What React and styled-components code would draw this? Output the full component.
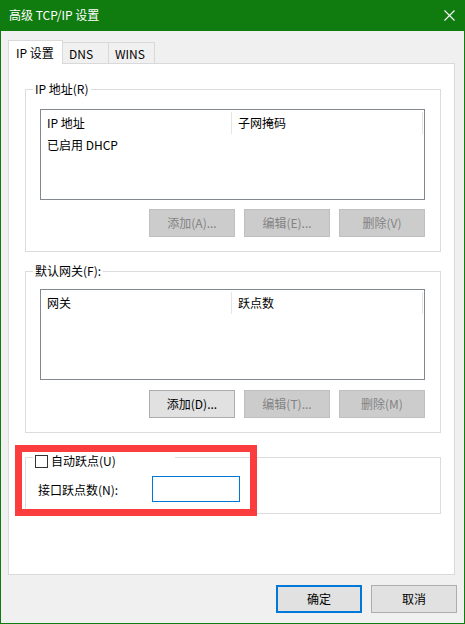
import React from "react";
import styled, { createGlobalStyle } from "styled-components";

const colors = {
  accent: "#107c10",
  face: "#f0f0f0",
  tabLine: "#d9d9d9",
  groupLine: "#dcdcdc",
  listLine: "#828790",
  focus: "#0078d7",
  annotation: "#fb3d3d",
};

const GlobalStyle = createGlobalStyle`
  html, body {
    margin: 0;
    padding: 0;
    background: #fff;
  }
  body {
    font-family: "Noto Sans CJK SC", "Noto Sans", sans-serif;
    font-size: 12px;
    color: #000;
  }
`;

const ipColumns = ["IP 地址", "子网掩码"];
const gatewayColumns = ["网关", "跃点数"];

function ListView({ columns, rows = [] }) {
  return (
    <ListBox>
      <ListHeader>
        {columns.map((c) => (
          <HeaderCell key={c}>{c}</HeaderCell>
        ))}
      </ListHeader>
      {rows.map((r) => (
        <ListRow key={r}>{r}</ListRow>
      ))}
    </ListBox>
  );
}

function App() {
  return (
    <>
      <GlobalStyle />
      <Window>
        <TitleBar>
          <Title>高级 TCP/IP 设置</Title>
          <CloseIcon width="11" height="11" viewBox="0 0 11 11">
            <path d="M0.5 0.5 L10.5 10.5 M10.5 0.5 L0.5 10.5" stroke="#fff" strokeWidth="1.1" />
          </CloseIcon>
        </TitleBar>

        <Body>
          <TabStrip>
            <Tab $active $width={55}>IP 设置</Tab>
            <Tab $width={47}>DNS</Tab>
            <Tab $width={47}>WINS</Tab>
          </TabStrip>

          <TabPage>
            <Group $top={25}>
              <Legend>IP 地址(R)</Legend>
              <ListSpacer $gap={12}>
                <ListView columns={ipColumns} rows={["已启用 DHCP"]} />
              </ListSpacer>
              <ButtonRow $gap={9}>
                <Button disabled>添加(A)...</Button>
                <Button disabled>编辑(E)...</Button>
                <Button disabled>删除(V)</Button>
              </ButtonRow>
            </Group>

            <Group $top={19}>
              <Legend>默认网关(F):</Legend>
              <ListSpacer $gap={10}>
                <ListView columns={gatewayColumns} />
              </ListSpacer>
              <ButtonRow $gap={10}>
                <Button>添加(D)...</Button>
                <Button disabled>编辑(T)...</Button>
                <Button disabled>删除(M)</Button>
              </ButtonRow>
            </Group>

            <MetricGroup>
              <CheckLegend>
                <CheckBox />
                自动跃点(U)
              </CheckLegend>
              <MetricRow>
                <span>接口跃点数(N):</span>
                <TextBox />
              </MetricRow>
            </MetricGroup>
          </TabPage>

          <Footer>
            <Button $default>确定</Button>
            <Button>取消</Button>
          </Footer>
        </Body>

        <Highlight />
      </Window>
    </>
  );
}

export default App;

const Window = styled.div`
  position: relative;
  box-sizing: border-box;
  width: 465px;
  height: 624px;
  background: ${colors.face};
  border: 1px solid ${colors.accent};
  border-top: none;
  display: flex;
  flex-direction: column;
`;

const TitleBar = styled.div`
  height: 31px;
  margin: 0 -1px;
  background: ${colors.accent};
  display: flex;
  align-items: center;
  justify-content: space-between;
  padding: 0 10px 0 9px;
`;

const Title = styled.span`
  color: #fff;
  font-size: 12px;
  line-height: 16px;
  margin-top: -1px;
`;

const CloseIcon = styled.svg`
  display: block;
  margin-top: -1px;
`;

const Body = styled.div`
  padding: 9px 0 0 7px;
  display: flex;
  flex-direction: column;
`;

const TabStrip = styled.div`
  display: flex;
  align-items: flex-end;
  height: 24px;
  margin-bottom: -1px;
`;

const Tab = styled.div`
  box-sizing: border-box;
  width: ${(p) => p.$width}px;
  height: ${(p) => (p.$active ? 24 : 22)}px;
  margin-left: ${(p) => (p.$active ? 0 : -1)}px;
  border: 1px solid ${colors.tabLine};
  border-bottom: none;
  background: ${(p) => (p.$active ? "#fff" : colors.face)};
  position: ${(p) => (p.$active ? "relative" : "static")};
  z-index: ${(p) => (p.$active ? 1 : "auto")};
  padding: ${(p) => (p.$active ? "3px 0 0 7px" : "2px 0 0 6px")};
  line-height: 18px;
  white-space: nowrap;
`;

const TabPage = styled.div`
  box-sizing: border-box;
  width: 447px;
  height: 512px;
  background: #fff;
  border: 1px solid ${colors.tabLine};
  padding: 0 0 0 16px;
`;

const Group = styled.div`
  box-sizing: border-box;
  width: 416px;
  margin-top: ${(p) => p.$top}px;
  border: 1px solid ${colors.groupLine};
  padding: 0 15px 14px 14px;
`;

const Legend = styled.div`
  width: fit-content;
  margin: -9px 0 0 -7px;
  padding: 0 2px;
  background: #fff;
  line-height: 16px;
  height: 16px;
`;

const ListSpacer = styled.div`
  margin-top: ${(p) => p.$gap}px;
`;

const ListBox = styled.div`
  box-sizing: border-box;
  width: 385px;
  height: 91px;
  border: 1px solid ${colors.listLine};
  background: #fff;
`;

const ListHeader = styled.div`
  display: flex;
  margin-top: 2px;
  height: 22px;
`;

const HeaderCell = styled.div`
  box-sizing: border-box;
  width: 191px;
  height: 22px;
  border-right: 1px solid #e5e5e5;
  padding-left: 6px;
  line-height: 21px;
`;

const ListRow = styled.div`
  height: 22px;
  line-height: 22px;
  padding-left: 6px;
`;

const ButtonRow = styled.div`
  display: flex;
  justify-content: flex-end;
  gap: 9px;
  margin-top: ${(p) => p.$gap}px;
`;

const Button = styled.button`
  box-sizing: border-box;
  width: 86px;
  height: 28px;
  margin: 0;
  padding: 0;
  font-family: inherit;
  font-size: 12px;
  line-height: 16px;
  color: #000;
  background: #e1e1e1;
  border: 1px solid #adadad;
  border-radius: 0;
  ${(p) => p.$default && `border: 2px solid ${colors.focus};`}
  &:disabled {
    background: #cccccc;
    border-color: #bfbfbf;
    color: #838383;
  }
`;

const MetricGroup = styled.div`
  box-sizing: border-box;
  width: 416px;
  height: 57px;
  margin-top: 24px;
  border: 1px solid ${colors.groupLine};
`;

const CheckLegend = styled.div`
  display: flex;
  align-items: center;
  gap: 3px;
  box-sizing: border-box;
  width: 142px;
  height: 16px;
  margin: -5px 0 0 7px;
  padding-left: 2px;
  background: #fff;
  line-height: 16px;
`;

const CheckBox = styled.span`
  box-sizing: border-box;
  width: 13px;
  height: 13px;
  border: 1px solid #333;
  background: #fff;
`;

const MetricRow = styled.div`
  display: flex;
  align-items: center;
  height: 26px;
  margin-top: 7px;
  padding-left: 12px;
  span {
    width: 114px;
  }
`;

const TextBox = styled.div`
  box-sizing: border-box;
  width: 88px;
  height: 26px;
  border: 1px solid ${colors.focus};
  background: #fff;
`;

const Footer = styled.div`
  display: flex;
  justify-content: flex-end;
  gap: 9px;
  margin-top: 10px;
  padding-right: 7px;
`;

const Highlight = styled.div`
  position: absolute;
  left: 14px;
  top: 445px;
  width: 242px;
  height: 71px;
  box-sizing: border-box;
  border: 7px solid ${colors.annotation};
  pointer-events: none;
`;
